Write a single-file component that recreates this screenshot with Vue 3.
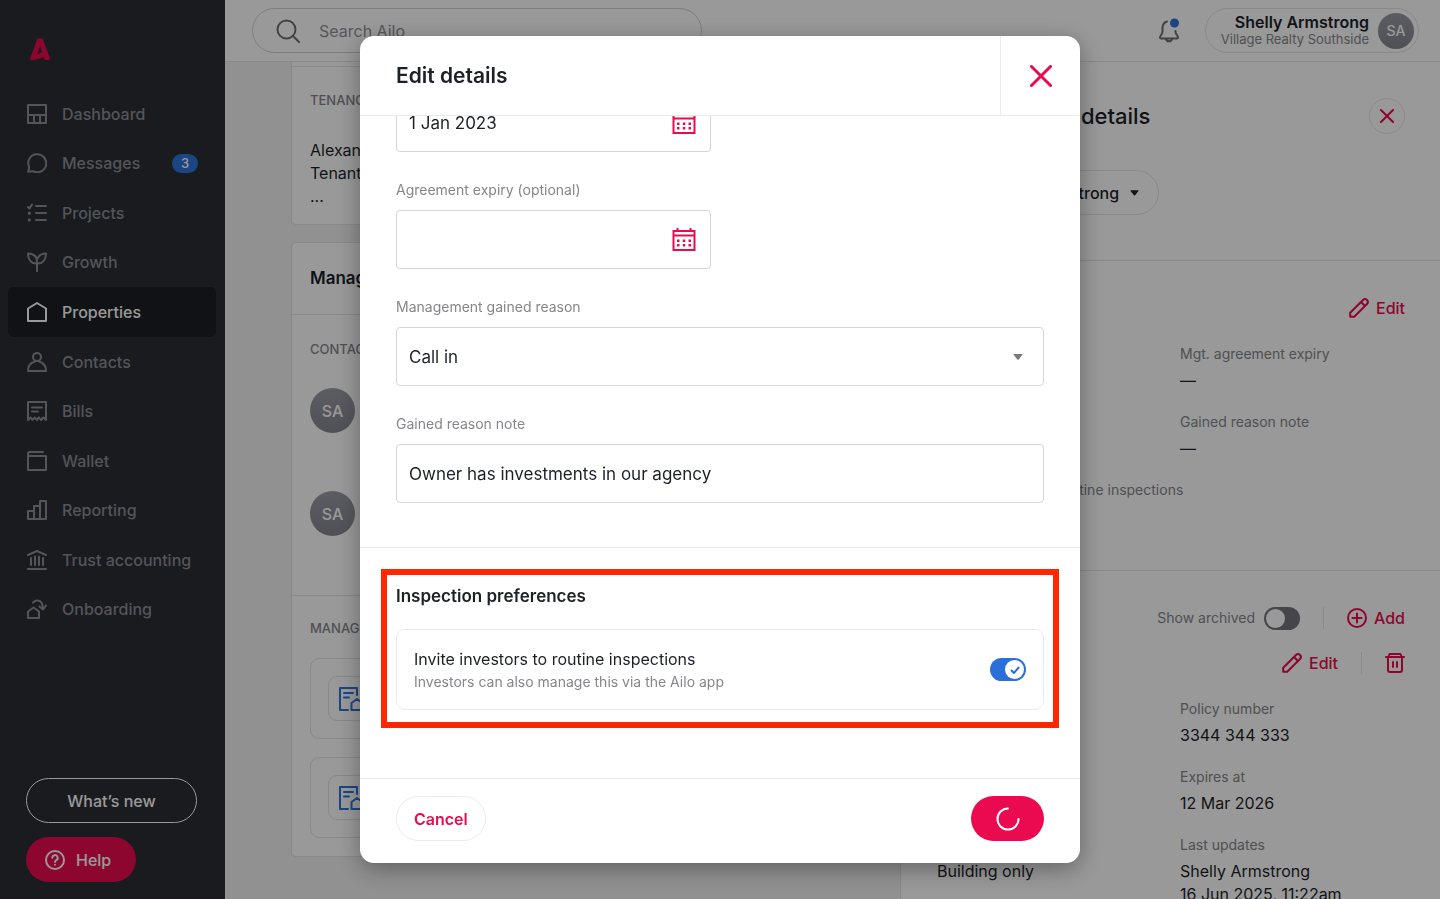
<template>
  <div class="shell">
    <!-- sidebar -->
    <aside class="sidebar">
      <a class="logo" href="#" aria-label="Ailo">
        <svg viewBox="0 0 20 22" width="20" height="22">
          <path fill="currentColor" fill-rule="evenodd" d="M8 .8Q10 -.4 12.200 .8Q13 1.500 13.400 2.600L19.900 20Q20.300 22 18.500 22H15.500Q14.600 22 14.200 21L13.600 19.300L6.500 21.300Q4 22 1.500 22Q-.4 22 .2 20.200L6.700 2.400Q7.100 1.300 8 .8ZM10 8.300L7.400 16.200L12 13.900Z" />
        </svg>
      </a>
      <nav class="nav">
        <a
          v-for="item in navItems"
          :key="item.label"
          href="#"
          class="nav-item"
          :class="{ active: item.label === 'Properties' }"
        >
          <svg class="icon" viewBox="0 0 20 20" width="20" height="20"><path :d="item.icon" /></svg>
          <span>{{ item.label }}</span>
          <span v-if="item.badge" class="badge">{{ item.badge }}</span>
        </a>
      </nav>
      <div class="sidebar-foot">
        <button class="whats-new" type="button">What’s new</button>
        <button class="help" type="button">
          <svg class="icon" viewBox="0 0 20 20" width="20" height="20">
            <circle cx="10" cy="10" r="9" />
            <path d="M7.300 7.800a2.700 2.700 0 1 1 4 2.400c-.9.500-1.300 1-1.300 1.900M10 14.700v.1" />
          </svg>
          Help
        </button>
      </div>
    </aside>

    <div class="main">
      <header class="topbar">
        <label class="search">
          <svg class="icon" viewBox="0 0 24 24" width="24" height="24">
            <circle cx="10.500" cy="10.500" r="9" /><path d="M17 17l6 6" />
          </svg>
          <input type="search" placeholder="Search Ailo" aria-label="Search Ailo" />
        </label>
        <button class="bell" type="button" aria-label="Notifications">
          <svg class="icon" viewBox="0 0 22 26" width="22" height="26">
            <path d="M9 3.500C6 4.500 4.500 7 4.500 10v4c0 2-2.500 3.500-2.500 5.500 0 .5.300 1 1 1h16c.7 0 1-.5 1-1 0-2-2.500-3.500-2.500-5.500v-1M8 21c.5 3 5.500 3 6 0" />
            <circle class="dot" cx="16.500" cy="5" r="4.500" />
          </svg>
        </button>
        <button class="user" type="button">
          <span class="user-text">
            <strong>Shelly Armstrong</strong>
            <small>Village Realty Southside</small>
          </span>
          <span class="avatar small">SA</span>
        </button>
      </header>

      <div class="content">
        <div class="cards">
          <section class="card tenancy">
            <h3 class="caps">TENANCY</h3>
            <p>Alexander<br />Tenant<br />...</p>
          </section>
          <section class="card">
            <h2 class="card-title">Management</h2>
            <div class="contacts">
              <h3 class="caps">CONTACTS</h3>
              <span class="avatar">SA</span>
              <span class="avatar">SA</span>
            </div>
            <div class="documents">
              <h3 class="caps">MANAGEMENT</h3>
              <div v-for="n in 2" :key="n" class="document">
                <span class="document-icon">
                  <svg class="icon" viewBox="0 0 24 24" width="24" height="24">
                    <path d="M18 8V1H1v22h8M5 6h9M5 10.500h5M12.500 16l5.500-4 5.500 4v7h-11z" />
                  </svg>
                </span>
              </div>
            </div>
          </section>
        </div>

        <!-- management drawer -->
        <aside class="drawer">
          <div class="drawer-head">
            <div class="drawer-title">
              <h2>Management details</h2>
              <button class="round-close" type="button" aria-label="Close details">
                <svg class="icon" viewBox="0 0 14 14" width="14" height="14"><path d="M1 1l12 12M13 1L1 13" /></svg>
              </button>
            </div>
            <button class="owner" type="button">
              <span class="avatar small">SA</span>
              Shelly Armstrong
              <svg viewBox="0 0 10 6" width="9" height="6"><path fill="currentColor" d="M1 0h8q1 0 .4.800L5.600 5.400q-.6.600-1.200 0L.6.800Q0 0 1 0z" /></svg>
            </button>
          </div>

          <div class="agreement">
            <div class="actions">
              <button class="link" type="button">
                <svg class="icon" viewBox="0 0 20 20" width="20" height="20"><path :d="pencil" /></svg>Edit
              </button>
            </div>
            <dl class="facts">
              <div class="right"><dt>Mgt. agreement expiry</dt><dd>—</dd></div>
              <div class="right"><dt>Gained reason note</dt><dd>—</dd></div>
              <div class="wide"><dt>Invite investors to routine inspections</dt><dd>Yes</dd></div>
            </dl>
          </div>

          <div class="insurance">
            <div class="actions">
              <label class="archived">
                Show archived
                <input v-model="showArchived" type="checkbox" class="switch" />
              </label>
              <span class="rule"></span>
              <button class="link" type="button">
                <svg class="icon" viewBox="0 0 20 20" width="20" height="20">
                  <circle cx="10" cy="10" r="9" /><path d="M10 5.500v9M5.500 10h9" />
                </svg>Add
              </button>
            </div>
            <div class="actions">
              <button class="link" type="button">
                <svg class="icon" viewBox="0 0 20 20" width="20" height="20"><path :d="pencil" /></svg>Edit
              </button>
              <span class="rule"></span>
              <button class="link" type="button" aria-label="Delete policy">
                <svg class="icon" viewBox="0 0 20 20" width="20" height="20">
                  <path d="M1 4h18M3.500 4L4.500 1h11l1 3M3 4v13q0 2 2 2h10q2 0 2-2V4M8 9v5M12 9v5" />
                </svg>
              </button>
            </div>
            <dl class="facts">
              <div class="right"><dt>Policy number</dt><dd>3344 344 333</dd></div>
              <div class="right"><dt>Expires at</dt><dd>12 Mar 2026</dd></div>
              <div><dt>Cover type</dt><dd>Building only</dd></div>
              <div><dt>Last updates</dt><dd>Shelly Armstrong<br />16 Jun 2025, 11:22am</dd></div>
            </dl>
          </div>
        </aside>
      </div>
    </div>

    <!-- edit dialog -->
    <div class="backdrop">
      <form class="modal" role="dialog" aria-labelledby="modal-title" @submit.prevent>
        <header class="modal-head">
          <h1 id="modal-title">Edit details</h1>
          <button class="modal-close" type="button" aria-label="Close">
            <svg class="icon" viewBox="0 0 22 22" width="22" height="22"><path d="M1.500 1.500l19 19M20.500 1.500l-19 19" /></svg>
          </button>
        </header>

        <div ref="body" class="modal-body">
          <div class="fields">
            <div v-for="field in dateFields" :key="field.id" class="field half">
              <label v-if="field.label" :for="field.id">{{ field.label }}</label>
              <div class="control">
                <input :id="field.id" v-model="field.value" type="text" :aria-label="field.name" />
                <button class="calendar" type="button" aria-label="Open calendar">
                  <svg viewBox="0 0 24 24" width="24" height="24">
                    <path fill="none" stroke="currentColor" stroke-width="2" d="M1.500 3h21v19h-21z" />
                    <path fill="none" stroke="currentColor" stroke-width="2" d="M1.500 7.500h21M5.500 0v3M18.500 0v3" />
                    <path fill="currentColor" d="M5 11.500h2.500V14H5zM10.800 11.500h2.500V14h-2.500zM16.500 11.500H19V14h-2.500zM5 16h2.500v2.500H5zM10.800 16h2.500v2.500h-2.500zM16.500 16H19v2.500h-2.500z" />
                  </svg>
                </button>
              </div>
            </div>
            <div class="field">
              <label for="reason">Management gained reason</label>
              <div class="control">
                <select id="reason" v-model="reason">
                  <option>Call in</option>
                </select>
                <svg class="caret" viewBox="0 0 10 6" width="10" height="6"><path fill="currentColor" d="M1 0h8q1 0 .4.800L5.600 5.400q-.6.600-1.200 0L.6.800Q0 0 1 0z" /></svg>
              </div>
            </div>
            <div class="field">
              <label for="note">Gained reason note</label>
              <div class="control">
                <input id="note" v-model="note" type="text" />
              </div>
            </div>
          </div>

          <section class="preferences">
            <h2>Inspection preferences</h2>
            <label class="preference">
              <span>
                <span class="preference-title">Invite investors to routine inspections</span>
                <span class="preference-hint">Investors can also manage this via the Ailo app</span>
              </span>
              <span class="switch-wrap">
                <input v-model="invite" type="checkbox" class="switch" />
                <svg v-if="invite" viewBox="0 0 10 8" width="10" height="8"><path d="M1 4l3 3 5-6" /></svg>
              </span>
            </label>
            <div class="highlight"></div>
          </section>
        </div>

        <footer class="modal-foot">
          <button class="cancel" type="button">Cancel</button>
          <button class="save" type="submit" aria-label="Saving">
            <svg viewBox="0 0 24 24" width="24" height="24"><path d="M12 1.500a10.500 10.500 0 1 0 10.500 10.500" /></svg>
          </button>
        </footer>
      </form>
    </div>
  </div>
</template>

<script setup>
import { ref, onMounted } from 'vue'

const navItems = [
  { label: 'Dashboard', icon: 'M1 1h18v18H1zM1 11h18M7 11v8M13 11v8' },
  { label: 'Messages', badge: 3, icon: 'M1.200 18.800l1-4.500A9 9 0 1 1 6 18.200z' },
  { label: 'Projects', icon: 'M1 4l1.500 1.500L5 1.500M1.800 9.700h1v1h-1zM1.800 16.500h1v1h-1zM9 3h10M9 10h10M9 17h10' },
  { label: 'Growth', icon: 'M10 19.200V9.500M10 11.500C4.500 12 1 8 1 1.500c5.500 0 9 3 9 8.500M10 11.500C15.500 12 19 8 19 1.500c-4 0-7 1.600-8.300 5' },
  { label: 'Properties', icon: 'M1 19V6.500L10 1l9 5.500V19z' },
  { label: 'Contacts', icon: 'M10 1a4 4 0 1 1 0 8 4 4 0 0 1 0-8zM1 19c0-5 3-8.500 6.800-9.500M12.200 9.500C16 10.500 19 14 19 19H1' },
  { label: 'Bills', icon: 'M1 19V1h18v18l-2.500-2.500L14 19l-2-2.500h-.5L10 19l-2.500-2.500L5.500 19l-2-2.500zM5 6.500h10M5 10.500h6' },
  { label: 'Wallet', icon: 'M1 5h18v14H1zM1 5V3q0-2 2-2h13' },
  { label: 'Reporting', icon: 'M1 19v-8h6v8zM7 19V6h6v13M13 6V1h6v18H1' },
  { label: 'Trust accounting', icon: 'M1 5l9-4 9 4M4 8v7M8 6.500V15M12 6.500V15M16 8v7M1 19h18' },
  { label: 'Onboarding', icon: 'M1 19v-6.500L6.500 8.500l5.500 4V19zM6 3.500C9 .5 15.500.2 15.800 9M12.500 7.500l3.500 3 3-4' },
]

const pencil = 'M1.200 18.800v-4L14 2q2-2 4 0t0 4L5.200 18.800zM12 4l4 4'

const dateFields = ref([
  { id: 'start', name: 'Agreement start', value: '1 Jan 2023' },
  { id: 'expiry', label: 'Agreement expiry (optional)', value: '' },
])
const reason = ref('Call in')
const note = ref('Owner has investments in our agency')
const invite = ref(true)
const showArchived = ref(false)

// the dialog opens at its last section
const body = ref(null)
onMounted(() => {
  body.value.scrollTop = body.value.scrollHeight
})
</script>

<style>
body {
  margin: 0;
}
</style>

<style scoped>
.shell {
  display: flex;
  height: 100vh;
  overflow: hidden;
  font-family: Inter, "Liberation Sans", sans-serif;
  font-size: 16px;
  line-height: 24px;
  color: #1d1f29;
}

.shell * {
  box-sizing: border-box;
}

h1, h2, h3, p, dl, dd {
  margin: 0;
}

button, input, select {
  font: inherit;
  color: inherit;
}

button {
  display: flex;
  align-items: center;
  padding: 0;
  border: none;
  background: none;
  cursor: pointer;
}

svg {
  flex: none;
}

.icon {
  fill: none;
  stroke: currentColor;
  stroke-width: 2;
  stroke-linecap: round;
  stroke-linejoin: round;
}

/* sidebar */
.sidebar {
  display: flex;
  flex-direction: column;
  flex: none;
  width: 225px;
  background: #2b2d34;
}

.logo {
  display: block;
  height: 51px;
  margin: 38px 0 0 30px;
  color: #eb0a50;
}

.nav {
  display: flex;
  flex-direction: column;
  min-height: 545px;
  padding: 0 9px 0 8px;
}

.nav-item {
  display: flex;
  flex: 1;
  align-items: center;
  gap: 15px;
  padding: 0 18px 0 19px;
  border-radius: 5px;
  color: #8c8d94;
  font-weight: 500;
  text-decoration: none;
}

.nav-item.active {
  background: #1c1e24;
  color: #fff;
}

.badge {
  width: 26px;
  margin-left: auto;
  border-radius: 10px;
  background: #2f74dd;
  color: #fff;
  font-size: 13px;
  line-height: 19px;
  text-align: center;
}

.sidebar-foot {
  display: flex;
  flex-direction: column;
  gap: 14px;
  margin-top: auto;
  padding: 0 28px 17px 26px;
}

.whats-new, .help {
  justify-content: center;
  height: 45px;
  border-radius: 23px;
  color: #fff;
  font-weight: 500;
}

.whats-new {
  border: 1px solid #fff;
}

.help {
  justify-content: flex-start;
  gap: 11px;
  width: 110px;
  padding-left: 19px;
  background: #eb0a50;
}

/* top bar */
.main {
  display: flex;
  flex: 1;
  flex-direction: column;
  min-width: 0;
}

.topbar {
  display: flex;
  align-items: center;
  flex: none;
  height: 62px;
  padding: 0 21px 0 27px;
  border-bottom: 1px solid #e4e4e6;
}

.search {
  display: flex;
  align-items: center;
  gap: 19px;
  width: 450px;
  height: 45px;
  padding: 0 23px;
  border: 1px solid #d2d2d4;
  border-radius: 23px;
  color: #6e6f75;
}

.search input {
  flex: 1;
  min-width: 0;
  padding: 0;
  border: none;
  outline: none;
  background: none;
}

.search input::placeholder {
  color: #909196;
}

.bell {
  margin-left: auto;
  margin-right: 25px;
  color: #6e6f75;
}

.bell .dot {
  fill: #2f74dd;
  stroke: none;
}

.user {
  gap: 9px;
  height: 45px;
  padding: 0 4px 0 15px;
  border: 1px solid #e4e4e6;
  border-radius: 23px;
  text-align: right;
}

.user-text {
  display: flex;
  flex-direction: column;
}

.user-text strong {
  font-weight: 600;
  line-height: 18px;
}

.user-text small {
  color: #85868c;
  font-size: 13px;
  line-height: 17px;
}

.avatar {
  display: flex;
  align-items: center;
  justify-content: center;
  flex: none;
  width: 45px;
  height: 45px;
  border-radius: 50%;
  background: linear-gradient(#9a9ba5, #85868f);
  color: #fff;
  font-weight: 500;
}

.avatar.small {
  width: 36px;
  height: 36px;
  font-size: 14px;
}

/* page cards */
.content {
  display: flex;
  flex: 1;
  min-height: 0;
}

.cards {
  flex: 1;
  padding: 0 66px;
  background: #f2f2f3;
}

.card {
  border: 1px solid #e4e4e6;
  border-radius: 5px;
  background: #fff;
}

.card + .card {
  margin-top: 17px;
}

.caps {
  color: #85868c;
  font-size: 13px;
  font-weight: 500;
  line-height: 20px;
}

.tenancy {
  padding: 4px 18px 16px;
  border-top: none;
  border-radius: 0 0 5px 5px;
}

.tenancy p {
  margin-top: 29px;
  line-height: 23px;
}

.tenancy::before {
  content: "";
  display: block;
  margin: 0 -18px 23px;
  border-top: 1px solid #e4e4e6;
}

.card-title {
  padding: 23px 18px 24px;
  border-bottom: 1px solid #e4e4e6;
  font-size: 17px;
  font-weight: 600;
}

.contacts {
  padding: 24px 18px 0;
  height: 281px;
  border-bottom: 1px solid #e4e4e6;
}

.contacts .avatar {
  margin: 29px 0 58px;
}

.documents {
  display: flex;
  flex-direction: column;
  gap: 18px;
  padding: 22px 18px 18px;
}

.documents .caps {
  margin-bottom: 2px;
}

.document {
  padding: 17px;
  border: 1px solid #e4e4e6;
  border-radius: 9px;
}

.document-icon {
  display: flex;
  align-items: center;
  justify-content: center;
  width: 45px;
  height: 45px;
  border: 1px solid #e4e4e6;
  border-radius: 9px;
  color: #2f74dd;
}

/* drawer */
.drawer {
  flex: none;
  width: 540px;
  border-left: 1px solid #e4e4e6;
  background: #fff;
}

.drawer-head {
  height: 199px;
  padding: 36px 35px 0 36px;
  border-bottom: 1px solid #e4e4e6;
}

.drawer-title {
  display: flex;
  align-items: center;
  justify-content: space-between;
}

.drawer-title h2 {
  font-size: 22px;
  font-weight: 500;
}

.round-close {
  justify-content: center;
  width: 36px;
  height: 36px;
  border: 1px solid #e4e4e6;
  border-radius: 50%;
  color: #eb0a50;
}

.owner {
  gap: 9px;
  height: 45px;
  margin-top: 36px;
  padding: 0 19px 0 4px;
  border: 1px solid #e4e4e6;
  border-radius: 23px;
  font-weight: 500;
}

.owner > svg {
  margin-left: 2px;
}

.agreement, .insurance {
  padding: 35px 35px 0 36px;
}

.agreement {
  height: 310px;
  border-bottom: 1px solid #e4e4e6;
}

.actions {
  display: flex;
  align-items: center;
  justify-content: flex-end;
  gap: 23px;
}

.actions + .actions {
  margin-top: 21px;
}

.link {
  gap: 7px;
  color: #eb0a50;
  font-weight: 500;
}

.rule {
  width: 1px;
  height: 22px;
  background: #e4e4e6;
}

.archived {
  display: flex;
  align-items: center;
  gap: 9px;
  color: #85868c;
  font-size: 14px;
}

.facts {
  display: grid;
  grid-template-columns: 1fr 1fr;
  margin-top: 22px;
  gap: 18px;
}

.facts .right {
  grid-column: 2;
}

.facts .wide {
  grid-column: 1 / 3;
}

.facts dt {
  color: #85868c;
  font-size: 14px;
}

.facts dd {
  margin-top: 3px;
  line-height: 23px;
}

/* dialog */
.backdrop {
  position: fixed;
  inset: 0;
  display: flex;
  justify-content: center;
  padding: 36px 0;
  background: rgba(0, 0, 0, 0.4);
}

.modal {
  display: flex;
  flex-direction: column;
  width: 50%;
  min-width: 560px;
  border-radius: 14px;
  background: #fff;
  box-shadow: 0 6px 24px rgba(0, 0, 0, 0.35);
}

.modal-head {
  display: flex;
  flex: none;
  align-items: center;
  justify-content: space-between;
  height: 80px;
  padding-left: 36px;
  border-bottom: 1px solid #ebebed;
}

.modal-head h1 {
  font-size: 21px;
  font-weight: 600;
}

.modal-close {
  justify-content: center;
  width: 80px;
  height: 100%;
  border-left: 1px solid #ebebed;
  color: #eb0a50;
}

.modal-close .icon {
  stroke-width: 3;
}

.modal-body {
  flex: 1;
  min-height: 0;
  overflow-y: auto;
  scrollbar-width: none;
}

.fields {
  display: flex;
  flex-direction: column;
  gap: 28px;
  padding: 36px 36px 44px;
  border-bottom: 1px solid #ebebed;
}

.field label {
  display: block;
  margin-bottom: 10px;
  color: #85868c;
  font-size: 14px;
  line-height: 20px;
}

.field.half {
  width: 315px;
}

.control {
  display: flex;
  align-items: center;
  height: 59px;
  border: 1px solid #d5d5d8;
  border-radius: 4px;
}

.control input, .control select {
  flex: 1;
  min-width: 0;
  height: 100%;
  padding: 0 12px;
  border: none;
  outline: none;
  background: none;
  appearance: none;
  font-size: 17px;
}

.calendar {
  margin-right: 14px;
  color: #eb0a50;
}

.caret {
  margin-right: 20px;
  color: #77787e;
}

.preferences {
  position: relative;
  padding: 36px 36px 68px;
}

.preferences h2 {
  font-size: 17px;
  font-weight: 600;
}

.preference {
  display: flex;
  align-items: center;
  justify-content: space-between;
  height: 81px;
  margin-top: 21px;
  padding: 0 17px;
  border: 1px solid #ebebed;
  border-radius: 9px;
}

.preference-title, .preference-hint {
  display: block;
}

.preference-hint {
  color: #85868c;
  font-size: 14px;
  line-height: 22px;
}

/* marker box drawn over the section */
.highlight {
  position: absolute;
  inset: 21px 21px 50px;
  border: 6px solid #ff2600;
  pointer-events: none;
}

.switch-wrap {
  position: relative;
  display: flex;
}

.switch-wrap svg {
  position: absolute;
  top: 8px;
  right: 6px;
  fill: none;
  stroke: #2b70d8;
  stroke-width: 2;
}

.switch {
  display: flex;
  align-items: center;
  width: 36px;
  height: 23px;
  margin: 0;
  padding: 2px;
  border-radius: 12px;
  background: #75767c;
  appearance: none;
}

.switch::before {
  content: "";
  width: 19px;
  height: 19px;
  border-radius: 50%;
  background: #fff;
}

.switch:checked {
  justify-content: flex-end;
  background: #2b70d8;
}

.modal-foot {
  display: flex;
  flex: none;
  justify-content: space-between;
  padding: 17px 36px 22px;
  border-top: 1px solid #ebebed;
}

.cancel, .save {
  justify-content: center;
  height: 45px;
  border-radius: 23px;
}

.cancel {
  padding: 0 17px;
  border: 1px solid #ebebed;
  color: #eb0a50;
  font-weight: 600;
}

.save {
  width: 73px;
  background: #eb0a50;
}

.save path {
  fill: none;
  stroke: #fff;
  stroke-width: 2;
  stroke-linecap: round;
}
</style>
